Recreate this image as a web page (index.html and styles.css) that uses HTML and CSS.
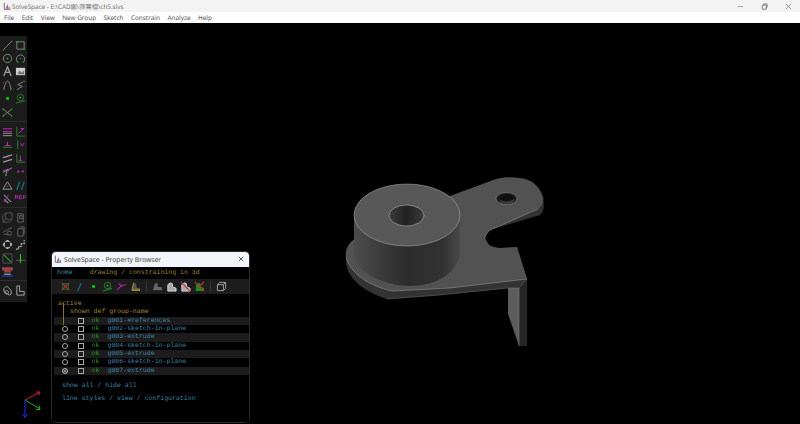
FILE: index.html
```html
<!DOCTYPE html>
<html>
<head>
  <title>SolveSpace</title>
  <link rel="stylesheet" href="styles.css">
</head>
<body>
  <div class="titlebar">
    <svg class="app-icon" viewBox="0 0 12 12"><path d="M2 1v10h9" fill="none" stroke="#777" stroke-width="1.5"/><path d="M4 10l3-7 1 7z" fill="#b050b0"/><path d="M8 10l1-4 2 4z" fill="#50a050"/></svg>
    <span class="app-title">SolveSpace - E:\CAD圖\彈簧檔\ch5.slvs</span>
    <div class="win-buttons">
      <svg viewBox="0 0 8 8"><path d="M1 4h6" stroke="#999"/></svg>
      <svg viewBox="0 0 8 8"><path d="M1.5 2.5h4.5v4.5h-4.5zM3 2.500v-1.500h4v4h-1" fill="none" stroke="#777"/></svg>
      <svg viewBox="0 0 8 8"><path d="M1 1l6 6M7 1l-6 6" stroke="#888"/></svg>
    </div>
  </div>
  <div class="menubar">
    <span>File</span><span>Edit</span><span>View</span><span>New Group</span><span>Sketch</span><span>Constrain</span><span>Analyze</span><span>Help</span>
  </div>

  <div class="canvas">
    <svg class="model" viewBox="0 0 800 402">
      <g transform="translate(0,-22)">
        <!-- leg -->
        <path d="M508 287L519 287L519 345L508 313Z" fill="#5c5c5c"/>
        <path d="M519 287L527 278L527 345L519 345Z" fill="#262626"/>
        <path d="M519 287V345" stroke="#888" stroke-width=".5"/>
        <!-- plate thickness -->
        <path d="M346 253L346 262C348 277 362 290 387 298L440 294L508 287L519 287L527 278L517 246L500 247L490 245L485 237L490 229L540 214C545 210 544 203 543 198L490 229L485 237Z" fill="#333"/>
        <!-- plate top -->
        <path d="M355 238C346 243 345 252 346 256C350 272 370 286 393 290L450 287L527 278L517 246L500 247C494 247 487 245 485 237C486 233 488 231 490 229L538 208C543 204 544 200 543 196C540 186 532 178 520 177C512 176 503 176 496 178L450 195Z" fill="#525252"/>
        <path d="M346 256C350 272 370 286 393 290L450 287L527 278M485 237C486 233 488 231 490 229L538 208" fill="none" stroke="#a0a0a0" stroke-width=".5"/>
        <path d="M527 278L519 287L508 287L440 294L387 298" fill="none" stroke="#777" stroke-width=".5"/>
        <!-- cylinder -->
        <path d="M354 217V254C356 272 385 285 410 285C436 285 457 272 460 253V213Z" fill="url(#barrel)"/>
        <ellipse cx="407" cy="214" rx="53" ry="31" fill="#585858" stroke="#b0b0b0" stroke-width=".5"/>
        <ellipse cx="406.500" cy="214.500" rx="17.500" ry="10.500" fill="url(#bore)" stroke="#c8c8c8" stroke-width=".5"/>
        <!-- small hole -->
        <ellipse cx="506.500" cy="197.500" rx="10.500" ry="6" fill="#1c1c1c" stroke="#999" stroke-width=".5"/>
        <ellipse cx="507" cy="199.500" rx="7" ry="3.500" fill="#3c3c3c"/>
        <ellipse cx="506.500" cy="197" rx="7" ry="3.500" fill="#101010"/>
        <!-- axes -->
        <path d="M25 399L40 391M36 391h4l-1.500 3.500" fill="none" stroke="#d02020"/>
        <path d="M25 399L40 408M36 408.500h4l-1-4" fill="none" stroke="#20b020"/>
        <path d="M25 399V416M22.500 413l2.500 3.500l2.500-3.500" fill="none" stroke="#2030e0"/>
      </g>
      <defs>
        <linearGradient id="barrel" x1="0" x2="1" y1="0" y2="0">
          <stop offset="0" stop-color="#4c4c4c"/>
          <stop offset=".5" stop-color="#2c2c2c"/>
          <stop offset=".85" stop-color="#333"/>
          <stop offset="1" stop-color="#4a4a4a"/>
        </linearGradient>
        <linearGradient id="bore" x1="0" x2="1" y1="0" y2="0">
          <stop offset="0" stop-color="#3c3c3c"/>
          <stop offset=".5" stop-color="#222"/>
          <stop offset="1" stop-color="#3a3a3a"/>
        </linearGradient>
      </defs>
    </svg>

    <div class="toolbar">
      <div class="tool-group">
        <svg viewBox="0 0 12 12"><path d="M1.500 10.500L10.500 1.500" stroke="#8a8a8a"/><path d="M1 11h1.500M10 1.500h1.500" stroke="#2a2"/></svg>
        <svg viewBox="0 0 12 12"><path d="M2 2h8v8h-8z" fill="none" stroke="#8a8a8a"/><path d="M1 1h2v2h-2zM9 9h2v2h-2z" fill="#292"/></svg>
        <svg viewBox="0 0 12 12"><circle cx="6" cy="6" r="4.500" fill="none" stroke="#8a8a8a"/><circle cx="6" cy="6" r="1" fill="#2a2"/></svg>
        <svg viewBox="0 0 12 12"><path d="M3 10A4.500 4.500 0 1 1 9 10" fill="none" stroke="#8a8a8a"/><path d="M2 10h2M8 10h2" stroke="#2a2"/><circle cx="6" cy="6" r=".8" fill="#2a2"/></svg>
        <svg viewBox="0 0 12 12"><path d="M2 11L6 1l4 10M3.500 7h5" fill="none" stroke="#9a9a9a" stroke-width="1.500"/></svg>
        <svg viewBox="0 0 12 12"><path d="M1 2h10v8h-10z" fill="#d0d0d0"/><path d="M3 8l2-3 2 2 3-2v4h-7z" fill="#777"/></svg>
        <svg viewBox="0 0 12 12"><path d="M2 11C3 3 6 1 6 1s2 0 4 9" fill="none" stroke="#8a8a8a"/><path d="M1 3h1.500" stroke="#d0d"/><path d="M9.500 9.500v2" stroke="#2a2"/></svg>
        <svg viewBox="0 0 12 12"><path d="M9 2L3 5l5 2-5 3" fill="none" stroke="#8a8a8a"/><path d="M9 1.500h2M2 10.500h2" stroke="#2a2"/></svg>
        <svg viewBox="0 0 12 12"><path d="M4.500 4.500h3v3h-3z" fill="#0c0"/></svg>
        <svg viewBox="0 0 12 12"><circle cx="6" cy="5" r="3.500" fill="none" stroke="#2a7a2a"/><circle cx="6" cy="5" r="1" fill="#2c2"/><path d="M1 11L11 8.500" stroke="#2a8a2a"/></svg>
        <svg viewBox="0 0 12 12"><path d="M1 2l10 8M1 10L11 2" stroke="#8a8a8a"/><path d="M1 1.500v2M10.500 9v2M1 9v2M10.500 1.500v2" stroke="#2a2"/></svg>
      </div>
      <div class="tool-group">
        <svg viewBox="0 0 12 12"><path d="M1 8h10M1 10.500h10" stroke="#999"/><path d="M1 3h10M1 6h10" stroke="#c030c0"/></svg>
        <svg viewBox="0 0 12 12"><path d="M2 1v10h9" fill="none" stroke="#2a8a2a"/><path d="M4 8L10 2M6 3h4" fill="none" stroke="#c030c0"/></svg>
        <svg viewBox="0 0 12 12"><path d="M1 9h10" stroke="#2a8a2a"/><path d="M6 3v4M3 7h6" stroke="#c030c0"/></svg>
        <svg viewBox="0 0 12 12"><path d="M3 1v10" stroke="#2a8a2a"/><path d="M6 4l2 4 2-4" fill="none" stroke="#a030a0"/></svg>
        <svg viewBox="0 0 12 12"><path d="M1 5L11 2M1 10l10-3" stroke="#999" stroke-width="1.300"/><path d="M5 4.500v1" stroke="#c030c0"/></svg>
        <svg viewBox="0 0 12 12"><path d="M2 1v9h9" fill="none" stroke="#2a8a2a"/><path d="M6 3v5M4 8h4" fill="none" stroke="#c030c0"/></svg>
        <svg viewBox="0 0 12 12"><path d="M1 7L11 2M6 3l-2 8" stroke="#999"/><path d="M1 5l4-1M7 3v3" stroke="#c030c0"/><path d="M3 10.500h2" stroke="#2a2"/></svg>
        <svg viewBox="0 0 12 12"><path d="M2 6h3M7 6h3M3.500 4.500v3M8.500 4.500v3" stroke="#a030a0"/></svg>
        <svg viewBox="0 0 12 12"><path d="M1 10L6 2l5 8z" fill="none" stroke="#999"/><path d="M5 7h2" stroke="#c030c0"/><path d="M1 10h2M9 10h2" stroke="#2a2"/></svg>
        <svg viewBox="0 0 12 12"><path d="M2 11l3-9M7 11l3-9" stroke="#1e6a70" stroke-width="1.500"/></svg>
        <svg viewBox="0 0 12 12"><path d="M2 2l8 8M2 7l5 4" stroke="#888" stroke-width="1.300"/><path d="M7 2L2 10" stroke="#a030a0"/></svg>
        <span class="ref-label">REF</span>
      </div>
      <div class="tool-group">
        <svg viewBox="0 0 12 12"><path d="M1 4l3-3h7v7l-3 3h-7zM4 1v7h7M1 11l3-3" fill="none" stroke="#555"/></svg>
        <svg viewBox="0 0 12 12"><path d="M3 2h6v9h-6zM5 4h3v3h-3z" fill="none" stroke="#666"/></svg>
        <svg viewBox="0 0 12 12"><path d="M1 7l5-3 5-2M2 9h6" stroke="#666"/><path d="M6 6h4v4h-4z" fill="none" stroke="#555"/></svg>
        <svg viewBox="0 0 12 12"><path d="M3 3h6v8h-6zM5 1h5v8" fill="none" stroke="#666"/></svg>
        <svg viewBox="0 0 12 12"><circle cx="6" cy="6" r="3.800" fill="none" stroke="#aaa" stroke-width="1.400" stroke-dasharray="2 1"/><path d="M1 5h2v2h-2zM9 5h2v2h-2zM5 1h2v2h-2zM5 9h2v2h-2z" fill="#bbb"/></svg>
        <svg viewBox="0 0 12 12"><path d="M1 11h3V8h3V5h3V1" fill="none" stroke="#aaa" stroke-width="1.400" stroke-dasharray="2.500 1"/></svg>
        <svg viewBox="0 0 12 12"><path d="M1 1h10v10h-10z" fill="none" stroke="#555"/><path d="M2 2l8 8" stroke="#2a2" stroke-width="1.200"/></svg>
        <svg viewBox="0 0 12 12"><path d="M1 8h10" stroke="#666"/><path d="M6 1v10" stroke="#2c2" stroke-width="1.200"/></svg>
        <svg class="wide" viewBox="0 0 12 12"><path d="M1 2h10v3h-2v2h-6v-2h-2z" fill="#a04040"/><path d="M3 8h6v1h-6z" fill="#ccc"/><path d="M1 9h10v2h-10z" fill="#203080"/></svg>
      </div>
      <div class="tool-group last">
        <svg viewBox="0 0 12 12"><path d="M2 4l3-3 5 5v4l-2 1-6-4zM5 6a2 2 0 1 0 .1 0" fill="none" stroke="#aaa"/></svg>
        <svg viewBox="0 0 12 12"><path d="M2 1h3v6h5v4h-8z" fill="none" stroke="#aaa"/></svg>
      </div>
    </div>

    <div class="browser">
      <div class="browser-title">
        <svg class="app-icon" viewBox="0 0 12 12"><path d="M2 1v10h9" fill="none" stroke="#777" stroke-width="1.500"/><path d="M4 10l3-7 1 7z" fill="#b050b0"/><path d="M8 10l1-4 2 4z" fill="#50a050"/></svg>
        <span class="browser-name">SolveSpace - Property Browser</span>
        <svg class="browser-close" viewBox="0 0 8 8"><path d="M1 1l6 6M7 1l-6 6" stroke="#333"/></svg>
      </div>
      <div class="browser-body">
        <div class="nav"><span class="link">home</span><span class="crumb">drawing / constraining in 3d</span></div>
        <div class="group-tools">
          <svg viewBox="0 0 12 12"><path d="M2 2l8 8M2 10l8-8" stroke="#c03030" stroke-width="1.200"/><path d="M3 3h6v6h-6z" fill="none" stroke="#2a6a2a"/></svg>
          <svg viewBox="0 0 12 12"><path d="M4 11L8 2" stroke="#1e6a80" stroke-width="1.300"/></svg>
          <svg viewBox="0 0 12 12"><path d="M4.500 4.500h3v3h-3z" fill="#0c0"/></svg>
          <svg viewBox="0 0 12 12"><circle cx="6" cy="5" r="3.500" fill="none" stroke="#1e8a1e"/><circle cx="6" cy="5" r="1" fill="#2c2"/><path d="M1 11L11 8" stroke="#2a9a2a"/></svg>
          <svg viewBox="0 0 12 12"><path d="M1 10L6 5l5-1M3 3l4 3" fill="none" stroke="#b020b0" stroke-width="1.200"/></svg>
          <svg viewBox="0 0 12 12"><path d="M2 10l2-8 3 1v4l4 1v2z" fill="#555"/><path d="M2 10h9" stroke="#b0a020" stroke-width="1.500"/><path d="M2 10l2-8" stroke="#b0a020"/></svg>
          <i class="sep"></i>
          <svg viewBox="0 0 12 12"><path d="M1 10l2-7 3-1v4l5 1v3z" fill="#666"/></svg>
          <svg viewBox="0 0 12 12"><path d="M2 11V4l3-2 2 1v3l4 2v3z" fill="#aaa" stroke="#ddd"/></svg>
          <svg viewBox="0 0 12 12"><path d="M2 11V4l3-2 2 1v3l4 2v3z" fill="#aaa" stroke="#ddd"/><path d="M1 1l10 10" stroke="#c03030" stroke-width="1.200"/></svg>
          <svg viewBox="0 0 12 12"><path d="M2 11V4l3-2 2 1v3l4 2v3z" fill="#1f8a1f"/><path d="M1 1l10 10M11 1L6 6" stroke="#c03030" stroke-width="1.200"/></svg>
          <i class="sep"></i>
          <svg viewBox="0 0 12 12"><path d="M1.500 4h6.500v6.500h-6.500zM1.500 4l2.500-2.500h6.500v6.500l-2.500 2.500M8 4l2.500-2.500" fill="none" stroke="#aaa"/></svg>
        </div>
        <div class="label-active">active</div>
        <div class="label-header">shown def group-name</div>
        <div class="group-list">
          <span class="active-bar"></span>
          <div class="row stripe"><span class="radio none"></span><span class="check"></span><span class="ok">ok</span><span class="link">g001-#references</span></div>
          <div class="row"><span class="radio"></span><span class="check"></span><span class="ok">ok</span><span class="link">g002-sketch-in-plane</span></div>
          <div class="row stripe"><span class="radio"></span><span class="check"></span><span class="ok">ok</span><span class="link">g003-extrude</span></div>
          <div class="row"><span class="radio"></span><span class="check"></span><span class="ok">ok</span><span class="link">g004-sketch-in-plane</span></div>
          <div class="row stripe"><span class="radio"></span><span class="check"></span><span class="ok">ok</span><span class="link">g005-extrude</span></div>
          <div class="row"><span class="radio"></span><span class="check"></span><span class="ok">ok</span><span class="link">g006-sketch-in-plane</span></div>
          <div class="row stripe"><span class="radio on"></span><span class="check"></span><span class="ok">ok</span><span class="link">g007-extrude</span></div>
        </div>
        <div class="foot first link">show all / hide all</div>
        <div class="foot link">line styles / view / configuration</div>
      </div>
    </div>
  </div>
</body>
</html>
```

FILE: styles.css
```css
body {
  margin: 0;
  width: 800px;
  height: 424px;
  overflow: hidden;
  display: flex;
  flex-direction: column;
  background-color: #000;
  font-family: "Noto Sans", "Noto Sans CJK TC", sans-serif;
  text-rendering: geometricPrecision;
}
.titlebar {
  height: 12px;
  display: flex;
  align-items: center;
  padding-left: 3px;
  background-color: #f3f3f3;
  font-size: 6.3px;
  color: #777;
}
.app-icon {
  width: 8px;
  height: 8px;
  flex: none;
}
.app-title {
  margin-left: 1px;
}
.win-buttons {
  margin-left: auto;
  display: flex;
  gap: 17px;
  padding-right: 8px;
}
.win-buttons svg {
  width: 7px;
  height: 7px;
}
.menubar {
  height: 10.500px;
  display: flex;
  align-items: center;
  gap: 7.500px;
  padding-left: 4px;
  background-color: #fff;
  font-size: 6.400px;
  color: #555;
}
.canvas {
  position: relative;
  flex: 1;
  background-color: #000;
}
.model {
  position: absolute;
  left: 0;
  top: 0;
  width: 800px;
  height: 402px;
}
.toolbar {
  position: absolute;
  left: 0;
  top: 13px;
  width: 27px;
  background-color: #1c1c1c;
  filter: blur(0.3px);
}
.tool-group {
  display: grid;
  grid-template-columns: 14px 13px;
  grid-auto-rows: 13.400px;
  justify-items: center;
  align-items: center;
  padding: 3px 0 2px;
  border-bottom: 1px solid #2c2c2c;
}
.tool-group.last {
  border-bottom: none;
  padding-bottom: 4px;
}
.tool-group svg {
  width: 11px;
  height: 11px;
}
.tool-group svg.wide {
  width: 13px;
  height: 13px;
}
.ref-label {
  font-family: "Liberation Sans", sans-serif;
  font-size: 6px;
  font-weight: bold;
  color: #a030a0;
}
.browser {
  position: absolute;
  left: 52px;
  top: 229px;
  width: 197px;
  height: 170px;
  display: flex;
  flex-direction: column;
  border-radius: 4px;
  overflow: hidden;
  box-shadow: 0 0 0 1px #2a2a2a;
}
.browser-title {
  height: 15px;
  display: flex;
  align-items: center;
  gap: 2px;
  padding: 0 5px 0 2px;
  background-color: #f2f5f9;
  font-size: 6.800px;
  color: #444;
}
.browser-close {
  width: 6px;
  height: 6px;
  margin-left: auto;
}
.browser-body {
  flex: 1;
  background-color: #000;
  font-family: "Liberation Mono", monospace;
  font-size: 6.550px;
  line-height: 8.300px;
}
.link {
  color: #3f86a8;
}
.nav {
  height: 10px;
  display: flex;
  padding: 2px 0 0 5px;
  box-sizing: content-box;
}
.crumb {
  margin-left: 17px;
  color: #98803a;
}
.group-tools {
  height: 15px;
  display: flex;
  align-items: center;
  gap: 3px;
  padding-left: 8px;
  background-color: #1d1d1d;
  filter: blur(0.25px);
}
.group-tools svg {
  width: 11px;
  height: 11px;
  flex: none;
}
.sep {
  width: 1px;
  height: 11px;
  margin: 0 2px;
  background-color: #383838;
}
.label-active {
  margin-top: 6px;
  padding-left: 6px;
  color: #a08a3a;
}
.label-header {
  padding-left: 18px;
  color: #a08a3a;
}
.group-list {
  position: relative;
  margin-top: 0.500px;
}
.active-bar {
  position: absolute;
  left: 11px;
  top: -14px;
  width: 1px;
  height: 22px;
  background-color: #8a7434;
}
.row {
  height: 8.350px;
  display: flex;
  align-items: center;
  margin-left: 2px;
  color: #3f86a8;
}
.stripe {
  background-color: #1c1c1c;
}
.radio {
  width: 4px;
  height: 4px;
  margin-left: 7.500px;
  border: 1px solid #aaa;
  border-radius: 50%;
}
.radio.none {
  border-color: transparent;
}
.radio.on {
  background-color: #aaa;
  box-shadow: inset 0 0 0 1px #222;
}
.check {
  width: 4px;
  height: 4px;
  margin-left: 10px;
  border: 1px solid #aaa;
}
.ok {
  width: 16px;
  margin-left: 8px;
  color: #1f9a1f;
}
.foot {
  padding-left: 10px;
}
.foot.first {
  margin-top: 6.500px;
}
.foot:last-child {
  margin-top: 5px;
}
```
